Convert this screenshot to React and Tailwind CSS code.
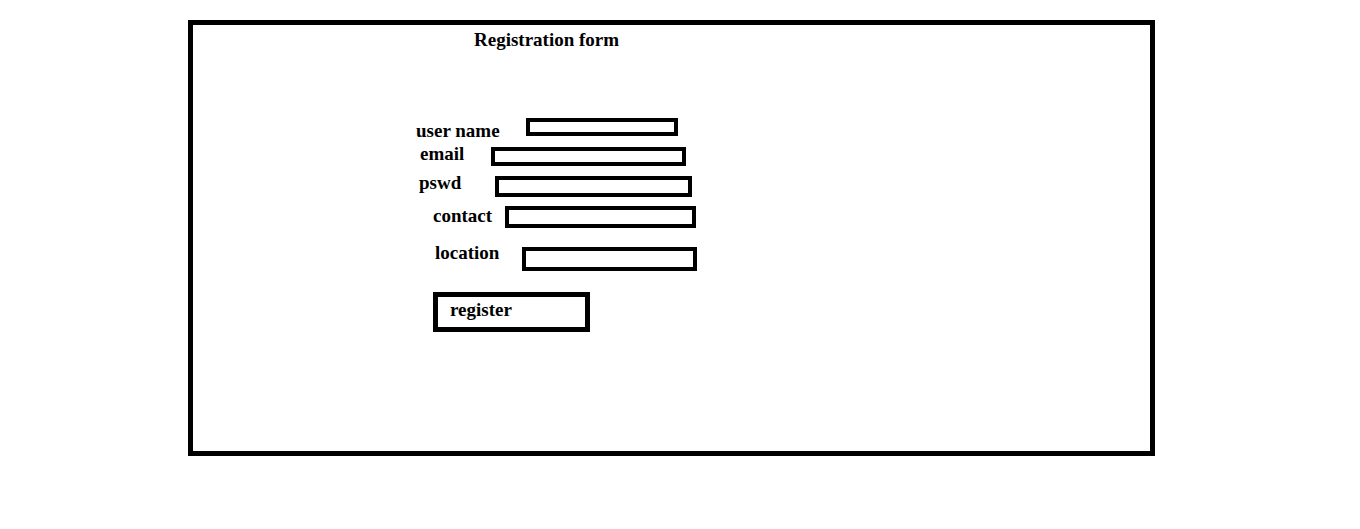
export default function App() {
  const font = { fontFamily: '"Liberation Serif", "Times New Roman", serif' };
  return (
    <div className="w-[1360px] h-[529px] bg-white overflow-hidden pt-[20px] pl-[188px]" style={font}>
      <div className="w-[967px] h-[436px] border-[5px] border-black flex flex-col items-start text-black text-[19px] leading-[22px] font-bold">
        <div className="mt-[4px] ml-[281px]">Registration form</div>

        <div className="flex items-start mt-[67px] ml-[223px]">
          <div className="w-[110px] mt-[2px]">user name</div>
          <div className="w-[152px] h-[18px] border-4 border-black" />
        </div>

        <div className="flex items-start mt-[1px] ml-[227px]">
          <div className="w-[71px]">email</div>
          <div className="w-[195px] h-[19px] mt-[4px] border-4 border-black" />
        </div>

        <div className="flex items-start mt-[6px] ml-[226px]">
          <div className="w-[76px]">pswd</div>
          <div className="w-[197px] h-[21px] mt-[4px] border-4 border-black" />
        </div>

        <div className="flex items-start mt-[6px] ml-[240px]">
          <div className="w-[72px] mt-[2px]">contact</div>
          <div className="w-[191px] h-[22px] mt-[3px] border-4 border-black" />
        </div>

        <div className="flex items-start mt-[14px] ml-[242px]">
          <div className="w-[87px]">location</div>
          <div className="w-[175px] h-[24px] mt-[5px] border-4 border-black" />
        </div>

        <div className="mt-[21px] ml-[240px] w-[157px] h-[40px] border-[5px] border-black pl-[12px] pt-[2px]">
          register
        </div>
      </div>
    </div>
  );
}
